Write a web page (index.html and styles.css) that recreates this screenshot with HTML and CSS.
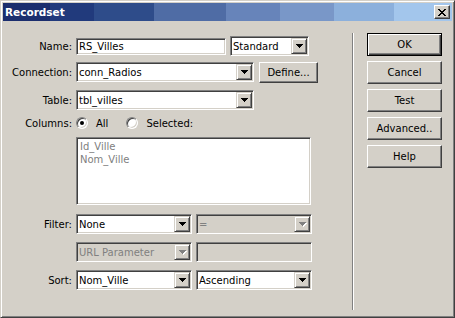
FILE: index.html
```
<!DOCTYPE html>
<html lang="en">
<head>
    <meta charset="UTF-8">
    <title>Recordset</title>
    <link rel="stylesheet" href="styles.css">
</head>
<body>
    <div class="window">
        <div class="titlebar">
            <span class="title">Recordset</span>
            <span class="close">
                <svg width="8" height="7" viewBox="0 0 8 7" shape-rendering="crispEdges"><path d="M0 0h2v1h-2z M6 0h2v1h-2z M1 1h2v1h-2z M5 1h2v1h-2z M2 2h4v1h-4z M3 3h2v1h-2z M2 4h4v1h-4z M1 5h2v1h-2z M5 5h2v1h-2z M0 6h2v1h-2z M6 6h2v1h-2z" fill="#000"/></svg>
            </span>
        </div>
        <div class="content">
            <div class="form">
                <div class="row">
                    <span class="lbl">Name:</span>
                    <div class="field textbox w-name">RS_Villes</div>
                    <div class="field combo w-std"><span class="val">Standard</span><span class="drop"><i class="arrow"></i></span></div>
                </div>
                <div class="row r-conn">
                    <span class="lbl">Connection:</span>
                    <div class="field combo w-wide"><span class="val">conn_Radios</span><span class="drop"><i class="arrow"></i></span></div>
                    <div class="btn btn-define">Define...</div>
                </div>
                <div class="row r-table">
                    <span class="lbl">Table:</span>
                    <div class="field combo w-wide"><span class="val">tbl_villes</span><span class="drop"><i class="arrow"></i></span></div>
                </div>
                <div class="row r-cols">
                    <span class="lbl">Columns:</span>
                    <span class="radio-opt first"><span class="radio checked"></span>All</span>
                    <span class="radio-opt"><span class="radio"></span>Selected:</span>
                </div>
                <div class="field list">
                    <div>Id_Ville</div>
                    <div>Nom_Ville</div>
                </div>
                <div class="row r-filter">
                    <span class="lbl">Filter:</span>
                    <div class="field combo w-half"><span class="val">None</span><span class="drop"><i class="arrow"></i></span></div>
                    <div class="field combo w-half dis"><span class="val">=</span><span class="drop"><i class="arrow"></i></span></div>
                </div>
                <div class="row r-url">
                    <span class="lbl"></span>
                    <div class="field combo w-half dis"><span class="val">URL Parameter</span><span class="drop"><i class="arrow"></i></span></div>
                    <div class="field textbox w-half dis tall"></div>
                </div>
                <div class="row r-sort">
                    <span class="lbl">Sort:</span>
                    <div class="field combo w-half"><span class="val">Nom_Ville</span><span class="drop"><i class="arrow"></i></span></div>
                    <div class="field combo w-half"><span class="val">Ascending</span><span class="drop"><i class="arrow"></i></span></div>
                </div>
            </div>
            <div class="sep"></div>
            <div class="buttons">
                <div class="btn default">OK</div>
                <div class="btn">Cancel</div>
                <div class="btn">Test</div>
                <div class="btn">Advanced..</div>
                <div class="btn">Help</div>
            </div>
        </div>
    </div>
</body>
</html>
```

FILE: styles.css
```
* { box-sizing: border-box; }
body { margin: 0; background: #d4d0c8; font-family: "DejaVu Sans", Verdana, sans-serif; font-size: 10px; color: #000; }

.window { width: 455px; height: 318px; padding: 2px; border: 1px solid; border-color: #d4d0c8 #404040 #404040 #d4d0c8; box-shadow: inset 1px 1px #fff, inset -1px -1px #808080; }

.titlebar { height: 18px; display: flex; align-items: center; justify-content: space-between; padding: 0 2px; color: #fff;
    background: linear-gradient(to right,
        #1b2e6e 0, #1b2e6e 47px,
        #213a7c 47px, #213a7c 91px,
        #2e4c8a 91px, #2e4c8a 151px,
        #4f6ca5 151px, #4f6ca5 223px,
        #6784ba 223px, #6784ba 277px,
        #7997c8 277px, #7997c8 331px,
        #8cb0dc 331px, #8cb0dc 391px,
        #a3c6ec 391px); }
.title { font-weight: bold; font-size: 10.5px; }
.close { width: 16px; height: 14px; display: flex; align-items: center; justify-content: center; background: #d4d0c8; border: 1px solid; border-color: #fff #404040 #404040 #fff; box-shadow: inset -1px -1px #808080; }

.content { display: flex; height: 294px; padding-left: 5px; }
.form { width: 344px; padding-top: 15px; display: flex; flex-direction: column; }
.row { display: flex; align-items: center; height: 20px; }
.r-conn { margin-top: 6px; }
.r-table { margin-top: 8px; }
.r-cols { margin-top: 6px; height: 14px; }
.r-filter { margin-top: 9px; }
.r-url, .r-sort { margin-top: 8px; }
.lbl { width: 64px; margin-right: 4px; text-align: right; white-space: nowrap; }

.field { height: 20px; background: #fff; border: 1px solid; border-color: #808080 #fff #fff #808080; box-shadow: inset 1px 1px #404040, inset -1px -1px #d4d0c8; display: flex; align-items: center; white-space: nowrap; }
.textbox { height: 17px; padding: 0 2px; }
.textbox.tall { height: 20px; }
.combo { padding: 1px; }
.combo .val { flex: 1; padding-left: 1px; }
.field.dis { background: #d4d0c8; color: #808080; }
.w-name { width: 150px; }
.w-std { width: 79px; margin-left: 4px; }
.w-wide { width: 178px; }
.w-half { width: 116px; }
.w-half + .w-half { margin-left: 4px; }

.drop { width: 16px; height: 16px; display: flex; align-items: center; justify-content: center; background: #d4d0c8; border: 1px solid; border-color: #d4d0c8 #404040 #404040 #d4d0c8; box-shadow: inset 1px 1px #fff, inset -1px -1px #808080; }
.arrow { --a: #000; display: block; width: 7px; height: 4px;
    background:
        linear-gradient(var(--a), var(--a)) 0 0 / 7px 1px no-repeat,
        linear-gradient(var(--a), var(--a)) 1px 1px / 5px 1px no-repeat,
        linear-gradient(var(--a), var(--a)) 2px 2px / 3px 1px no-repeat,
        linear-gradient(var(--a), var(--a)) 3px 3px / 1px 1px no-repeat; }
.dis .arrow { --a: #808080; filter: drop-shadow(1px 1px 0 #fff); }

.radio-opt { display: flex; align-items: center; gap: 8px; }
.radio-opt.first { margin-right: 18px; }
.radio { position: relative; width: 12px; height: 12px; border-radius: 50%; background: #fff; border: 1px solid; border-color: #808080 #fff #fff #808080; box-shadow: inset 1px 1px #404040, inset -1px -1px #d4d0c8; }
.radio.checked::after { content: ""; position: absolute; left: 3px; top: 3px; width: 4px; height: 4px; border-radius: 50%; background: #000; }

.list { display: block; margin: 7px 0 0 68px; width: 235px; height: 68px; padding: 2px 3px; line-height: 13px; color: #808080; }

.sep { width: 2px; height: 277px; margin-top: 12px; border-left: 1px solid #808080; border-right: 1px solid #fff; }
.buttons { margin-left: 13px; padding-top: 12px; display: flex; flex-direction: column; gap: 5px; }
.btn { width: 75px; height: 23px; display: flex; align-items: center; justify-content: center; background: #d4d0c8; border: 1px solid; border-color: #fff #404040 #404040 #fff; box-shadow: inset -1px -1px #808080; }
.btn.default { border-color: #000; box-shadow: inset 1px 1px #fff, inset -1px -1px #404040, inset -2px -2px #808080; }
.btn-define { width: 59px; height: 21px; margin-left: 5px; }
```
